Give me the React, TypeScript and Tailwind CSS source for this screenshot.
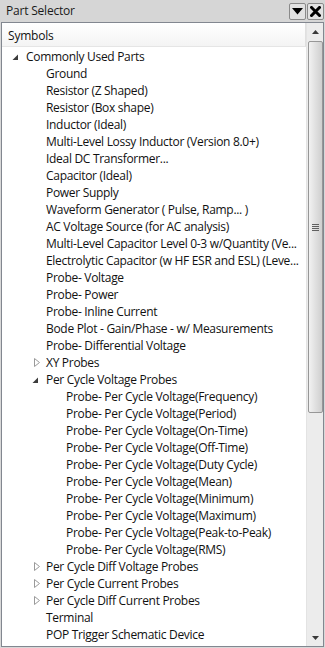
import React from "react";

type Row = { t: string; l: number; a?: "open" | "closed" };

const rows: Row[] = [
  { t: "Commonly Used Parts", l: 0, a: "open" },
  { t: "Ground", l: 1 },
  { t: "Resistor (Z Shaped)", l: 1 },
  { t: "Resistor (Box shape)", l: 1 },
  { t: "Inductor (Ideal)", l: 1 },
  { t: "Multi-Level Lossy Inductor (Version 8.0+)", l: 1 },
  { t: "Ideal DC Transformer...", l: 1 },
  { t: "Capacitor (Ideal)", l: 1 },
  { t: "Power Supply", l: 1 },
  { t: "Waveform Generator ( Pulse, Ramp... )", l: 1 },
  { t: "AC Voltage Source (for AC analysis)", l: 1 },
  { t: "Multi-Level Capacitor Level 0-3 w/Quantity (Ve...", l: 1 },
  { t: "Electrolytic Capacitor (w HF ESR and ESL) (Leve...", l: 1 },
  { t: "Probe- Voltage", l: 1 },
  { t: "Probe- Power", l: 1 },
  { t: "Probe- Inline Current", l: 1 },
  { t: "Bode Plot - Gain/Phase - w/ Measurements", l: 1 },
  { t: "Probe- Differential Voltage", l: 1 },
  { t: "XY Probes", l: 1, a: "closed" },
  { t: "Per Cycle Voltage Probes", l: 1, a: "open" },
  { t: "Probe- Per Cycle Voltage(Frequency)", l: 2 },
  { t: "Probe- Per Cycle Voltage(Period)", l: 2 },
  { t: "Probe- Per Cycle Voltage(On-Time)", l: 2 },
  { t: "Probe- Per Cycle Voltage(Off-Time)", l: 2 },
  { t: "Probe- Per Cycle Voltage(Duty Cycle)", l: 2 },
  { t: "Probe- Per Cycle Voltage(Mean)", l: 2 },
  { t: "Probe- Per Cycle Voltage(Minimum)", l: 2 },
  { t: "Probe- Per Cycle Voltage(Maximum)", l: 2 },
  { t: "Probe- Per Cycle Voltage(Peak-to-Peak)", l: 2 },
  { t: "Probe- Per Cycle Voltage(RMS)", l: 2 },
  { t: "Per Cycle Diff Voltage Probes", l: 1, a: "closed" },
  { t: "Per Cycle Current Probes", l: 1, a: "closed" },
  { t: "Per Cycle Diff Current Probes", l: 1, a: "closed" },
  { t: "Terminal", l: 1 },
  { t: "POP Trigger Schematic Device", l: 1 },
];

const pad = ["pl-[24px]", "pl-[44px]", "pl-[64px]"];

function Arrow({ a }: { a: "open" | "closed" }) {
  if (a === "open") {
    return (
      <svg width="7" height="7" viewBox="0 0 7 7" className="absolute left-[-14px] top-[6px]">
        <polygon points="6,0.5 6,6 0.5,6" fill="#3c3c3c" />
      </svg>
    );
  }
  return (
    <svg width="7" height="9" viewBox="0 0 7 9" className="absolute left-[-12px] top-[4px]">
      <polygon points="0.5,0.5 5.5,4.5 0.5,8.5" fill="none" stroke="#9a9a9a" strokeWidth="1" />
    </svg>
  );
}

export default function App() {
  return (
    <div
      className="w-[325px] h-[648px] bg-[#d8d8d8] flex flex-col overflow-hidden text-[12px] text-[#111]"
      style={{ fontFamily: '"Open Sans", "Noto Sans", sans-serif' }}
    >
      <div className="h-[22px] flex items-center justify-between pl-[6px] pr-[1px] bg-[#d6d6d6]">
        <span className="text-[#1a1a1a] leading-none tracking-[-0.2px]">Part Selector</span>
        <div className="flex gap-[1px]">
          <div className="w-[17px] h-[17px] border border-[#8a8a8a] rounded-[2px] bg-[#e2e2e2] flex items-center justify-center">
            <svg width="11" height="7" viewBox="0 0 11 7">
              <polygon points="0,0 11,0 5.5,6.5" fill="#000" />
            </svg>
          </div>
          <div className="w-[17px] h-[17px] border border-[#8a8a8a] rounded-[2px] bg-[#e2e2e2] flex items-center justify-center">
            <svg width="11" height="11" viewBox="0 0 11 11">
              <path d="M1.5 1.5 L9.5 9.5 M9.5 1.5 L1.5 9.5" stroke="#000" strokeWidth="3" strokeLinecap="square" />
            </svg>
          </div>
        </div>
      </div>
      <div className="flex-1 mx-[1px] mb-[1px] border border-[#828790] bg-white flex min-h-0">
        <div className="flex-1 flex flex-col min-w-0">
          <div className="h-[24px] flex items-center pl-[6px] border-b border-[#e5e5e5] border-r border-r-[#e0e0e0] bg-gradient-to-b from-white to-[#f4f4f4]">
            <span className="tracking-[-0.2px] pt-[2px]">Symbols</span>
          </div>
          <div className="pt-[1px] flex flex-col overflow-hidden tracking-[-0.3px]">
            {rows.map((r, i) => (
              <div key={i} className={`h-[17px] leading-[17px] whitespace-nowrap ${pad[r.l]}`}>
                <span className="relative">
                  {r.a && <Arrow a={r.a} />}
                  {r.t}
                </span>
              </div>
            ))}
          </div>
        </div>
        <div className="w-[17px] bg-[#ececec] flex flex-col items-center border-l border-[#e3e3e3]">
          <div className="h-[17px] w-full flex items-center justify-center">
            <svg width="7" height="4" viewBox="0 0 7 4">
              <polygon points="3.5,0 7,4 0,4" fill="#3a3a3a" />
            </svg>
          </div>
          <div className="w-[15px] h-[372px] mt-[1px] rounded-[2px] border border-[#979797] bg-gradient-to-r from-[#f2f2f2] via-[#e0e0e0] to-[#cfcfcf] flex items-center justify-center">
            <div className="flex flex-col gap-[1px]">
              <div className="w-[7px] h-[1px] bg-[#606060]" />
              <div className="w-[7px] h-[1px] bg-[#606060]" />
              <div className="w-[7px] h-[1px] bg-[#606060]" />
              <div className="w-[7px] h-[1px] bg-[#606060]" />
            </div>
          </div>
          <div className="flex-1" />
          <div className="h-[17px] w-full flex items-center justify-center">
            <svg width="7" height="4" viewBox="0 0 7 4">
              <polygon points="0,0 7,0 3.5,4" fill="#3a3a3a" />
            </svg>
          </div>
        </div>
      </div>
    </div>
  );
}
